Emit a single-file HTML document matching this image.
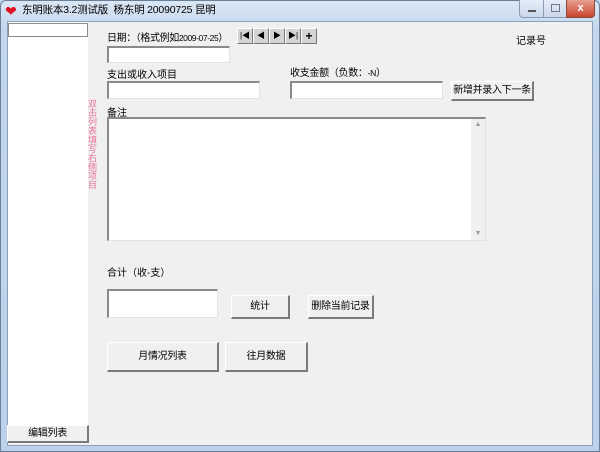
<!DOCTYPE html>
<html><head><meta charset="utf-8"><style>
*{margin:0;padding:0;box-sizing:border-box}
body{width:600px;height:452px;overflow:hidden;background:#c5d7ec;font-family:"Liberation Sans","Noto Sans CJK SC",sans-serif;font-size:10px;color:#000;position:relative}
.a{position:absolute;white-space:nowrap}
#frame{left:0;top:0;width:600px;height:452px;background:linear-gradient(#dbe7f5,#c3d6ec 30px,#bcd1ea);border:1px solid #6b7f99;border-radius:6px 6px 0 0}
#client{left:7px;top:21px;width:586px;height:425px;background:#f0f0f0;border:1px solid #8aa0bb}
.w{background:#fff}
.in{background:#fff;border-top:2px solid #8a8a8a;border-left:2px solid #8a8a8a;border-right:1px solid #e3e3e3;border-bottom:1px solid #e3e3e3}
.btn{background:#f0f0f0;border-top:1px solid #fff;border-left:1px solid #fff;border-right:2px solid #7a7a7a;border-bottom:2px solid #7a7a7a;text-align:center;font-size:10px;letter-spacing:-0.3px}
.nb{top:28px;width:16px;height:16px;background:#d4d4d4;border-top:1px solid #fff;border-left:1px solid #fff;border-right:1px solid #777;border-bottom:1px solid #777;font-size:8px;line-height:14px;text-align:center}
</style></head><body>
<div class="a" id="frame"></div>
<div class="a" style="left:5px;top:4px;color:#e01020;font-size:14px;line-height:14px">❤</div>
<div class="a" style="left:22px;top:4px;font-size:10.5px;line-height:13px;letter-spacing:-0.2px">东明账本3.2测试版&nbsp;&nbsp;杨东明 20090725 昆明</div>
<div class="a" style="left:519px;top:0;width:25px;height:18px;border:1px solid #8a9bb3;border-top:none;border-radius:0 0 0 4px;background:linear-gradient(#e6eef8,#c9d7ea)"><div class="a" style="left:8px;top:10px;width:8px;height:2px;background:#fff;border:1px solid #555"></div></div>
<div class="a" style="left:543px;top:0;width:24px;height:18px;border:1px solid #8a9bb3;border-top:none;background:linear-gradient(#e6eef8,#c9d7ea)"><div class="a" style="left:7px;top:4px;width:9px;height:8px;border:1px solid #778"></div></div>
<div class="a" style="left:566px;top:0;width:29px;height:18px;border:1px solid #8a4a40;border-top:none;border-radius:0 0 4px 0;background:linear-gradient(#e8a090,#c84530);color:#fff;font-weight:bold;text-align:center;font-size:11px;line-height:16px">x</div>
<div class="a" id="client"></div>
<div class="a w" style="left:8px;top:22px;width:80px;height:403px"></div>
<div class="a" style="left:8px;top:23px;width:80px;height:14px;border:1px solid #8a8a8a;background:#fff"></div>
<div class="a btn" style="left:7px;top:425px;width:82px;height:18px;line-height:15px">编辑列表</div>
<div class="a" style="left:88px;top:100px;width:10px;color:#e8709a;font-size:9px;line-height:9px;white-space:normal;word-break:break-all">双击列表填写右侧项目</div>
<div class="a" style="left:107px;top:29px;letter-spacing:-0.4px">日期：（格式例如<span style="font-size:8.5px">2009-07-25</span>）</div>
<div class="a nb" style="left:237px">|◀</div>
<div class="a nb" style="left:253px">◀</div>
<div class="a nb" style="left:269px">▶</div>
<div class="a nb" style="left:285px">▶|</div>
<div class="a nb" style="left:301px;font-size:12px;font-weight:bold">+</div>
<div class="a" style="left:516px;top:32px">记录号</div>
<div class="a in" style="left:107px;top:46px;width:123px;height:17px"></div>
<div class="a" style="left:107px;top:66px">支出或收入项目</div>
<div class="a in" style="left:107px;top:81px;width:153px;height:18px"></div>
<div class="a" style="left:290px;top:64px;letter-spacing:-0.3px">收支金额（负数：<span style="font-size:8.5px">-N</span>）</div>
<div class="a in" style="left:290px;top:81px;width:153px;height:18px"></div>
<div class="a btn" style="left:451px;top:81px;width:83px;height:20px;line-height:17px">新增并录入下一条</div>
<div class="a" style="left:107px;top:104px">备注</div>
<div class="a in" style="left:107px;top:117px;width:379px;height:124px"></div>
<div class="a" style="left:471px;top:119px;width:14px;height:121px;background:#f0f0f0;color:#999;font-size:7px;text-align:center;line-height:12px">▲<div style="position:absolute;bottom:0;width:14px">▼</div></div>
<div class="a" style="left:107px;top:264px">合计（收-支）</div>
<div class="a in" style="left:107px;top:289px;width:111px;height:29px"></div>
<div class="a btn" style="left:231px;top:295px;width:59px;height:24px;line-height:21px">统计</div>
<div class="a btn" style="left:308px;top:295px;width:66px;height:24px;line-height:21px">删除当前记录</div>
<div class="a btn" style="left:107px;top:342px;width:112px;height:30px;line-height:27px">月情况列表</div>
<div class="a btn" style="left:225px;top:342px;width:83px;height:30px;line-height:27px">往月数据</div>
</body></html>
